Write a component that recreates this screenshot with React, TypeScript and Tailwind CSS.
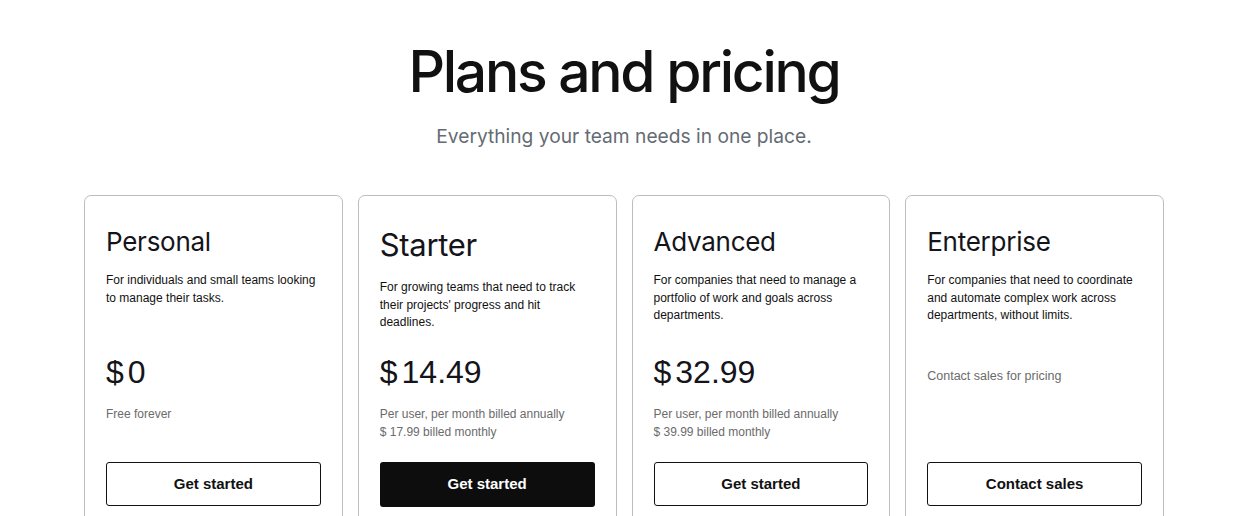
import React from "react";

type Plan = {
  name: string;
  desc: string;
  price?: string;
  sub: string[];
  cta: string;
  featured?: boolean;
  contact?: boolean;
};

const plans: Plan[] = [
  {
    name: "Personal",
    desc: "For individuals and small teams looking to manage their tasks.",
    price: "0",
    sub: ["Free forever"],
    cta: "Get started",
  },
  {
    name: "Starter",
    desc: "For growing teams that need to track their projects' progress and hit deadlines.",
    price: "14.49",
    sub: ["Per user, per month billed annually", "$ 17.99 billed monthly"],
    cta: "Get started",
    featured: true,
  },
  {
    name: "Advanced",
    desc: "For companies that need to manage a portfolio of work and goals across departments.",
    price: "32.99",
    sub: ["Per user, per month billed annually", "$ 39.99 billed monthly"],
    cta: "Get started",
  },
  {
    name: "Enterprise",
    desc: "For companies that need to coordinate and automate complex work across departments, without limits.",
    sub: [],
    cta: "Contact sales",
    contact: true,
  },
];

const arial = { fontFamily: "'Liberation Sans', Arial, sans-serif" };

function Card({ p }: { p: Plan }) {
  return (
    <div className="flex h-[340px] flex-col rounded-[7px] border border-[#bdbdbd] bg-white px-[21px] pt-[30px]">
      <h2
        className={
          p.featured
            ? "mt-[2px] text-[31px] leading-[34px] tracking-[-0.01em] text-[#14141a]"
            : "text-[26px] leading-[32px] tracking-[-0.01em] text-[#14141a]"
        }
      >
        {p.name}
      </h2>
      <p
        style={arial}
        className={
          p.featured
            ? "mt-[17px] h-[71px] text-[12px] leading-[17.5px] text-[#111]"
            : "mt-[14px] h-[78px] text-[12px] leading-[17.5px] text-[#111]"
        }
      >
        {p.desc}
      </p>
      <div className="flex h-[44px] items-center">
        {p.contact ? (
          <span style={arial} className="pt-[8px] text-[12.5px] text-[#6b6b6b]">
            Contact sales for pricing
          </span>
        ) : (
          <span
            style={arial}
            className="flex items-baseline text-[32px] leading-[44px] text-[#14141a]"
          >
            <span>$</span>
            <span className="ml-[4px]">{p.price}</span>
          </span>
        )}
      </div>
      <div
        style={arial}
        className="mt-[12px] h-[36px] text-[12px] leading-[17.5px] text-[#6b6b6b]"
      >
        {p.sub.map((s) => (
          <div key={s}>{s}</div>
        ))}
      </div>
      <button
        style={arial}
        className={
          p.featured
            ? "mt-[20px] h-[45px] w-full rounded-[3px] bg-[#0d0d0d] text-[15px] font-bold text-white"
            : "mt-[20px] h-[44px] w-full rounded-[3px] border border-[#111] bg-white text-[15px] font-bold text-[#111]"
        }
      >
        {p.cta}
      </button>
    </div>
  );
}

export default function App() {
  return (
    <div
      className="h-[516px] w-full overflow-hidden bg-white"
      style={{ fontFamily: "Inter, 'Noto Sans', sans-serif" }}
    >
      <div className="flex flex-col items-center pt-[36px]">
        <h1 className="text-[57px] leading-[72px] font-medium tracking-[-0.04em] text-[#111]">
          Plans and pricing
        </h1>
        <p className="mt-[15px] text-[19.2px] leading-[26px] text-[#646b73]">
          Everything your team needs in one place.
        </p>
      </div>
      <div className="mx-auto mt-[46px] grid w-[1080px] grid-cols-4 gap-[15px]">
        {plans.map((p) => (
          <Card key={p.name} p={p} />
        ))}
      </div>
    </div>
  );
}
